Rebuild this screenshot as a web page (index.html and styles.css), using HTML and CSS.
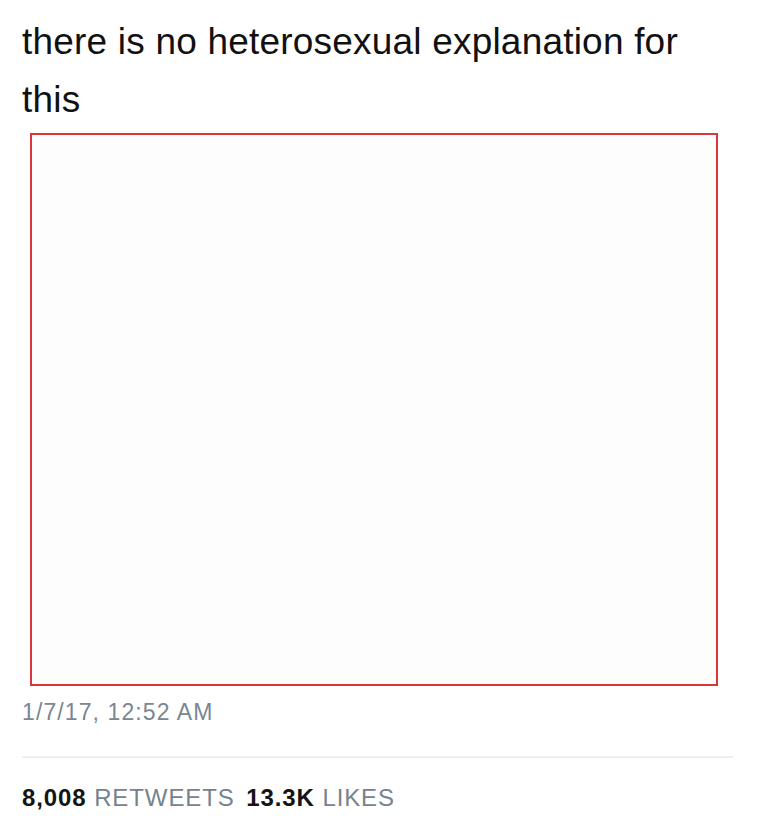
FILE: index.html
```html
<!doctype html>
<html>
    <head>
        <title>Tweet</title>
        <link rel="stylesheet" href="styles.css">
    </head>
    <body>
        <div class="tweet">
            <p class="tweet-text">there is no heterosexual explanation for this</p>

            <div class="media-box"></div>

            <p class="timestamp">1/7/17, 12:52 AM</p>

            <div class="stats">
                <span class="count">8,008</span> <span class="label">RETWEETS</span>
                <span class="count">13.3K</span> <span class="label">LIKES</span>
            </div>
        </div>
    </body>
</html>
```

FILE: styles.css
```css
* {
    font-family: "Liberation Sans", Arial, sans-serif;
}

body {
    background: #fff;
    margin: 0;
    padding: 0;
}

.tweet {
    padding: 13px 25px 0 22px;
}

.tweet-text {
    margin: 0;
    font-size: 37px;
    letter-spacing: 0.2px;
    line-height: 58px;
    color: #111;
}

.media-box {
    margin: 4px 15px 0 8px;
    height: 549px;
    border: 2px solid #d9373c;
    background: #fdfdfd;
}

.timestamp {
    margin: 0;
    padding: 13px 0 30px 0;
    font-size: 23px;
    letter-spacing: 1.1px;
    color: #7a8692;
    border-bottom: 2px solid #eeeeee;
}

.stats {
    padding-top: 26px;
    font-size: 24px;
    letter-spacing: 0.9px;
}

.count {
    font-weight: bold;
    color: #141414;
}

.label {
    color: #75828f;
    margin-right: 4px;
}
```
